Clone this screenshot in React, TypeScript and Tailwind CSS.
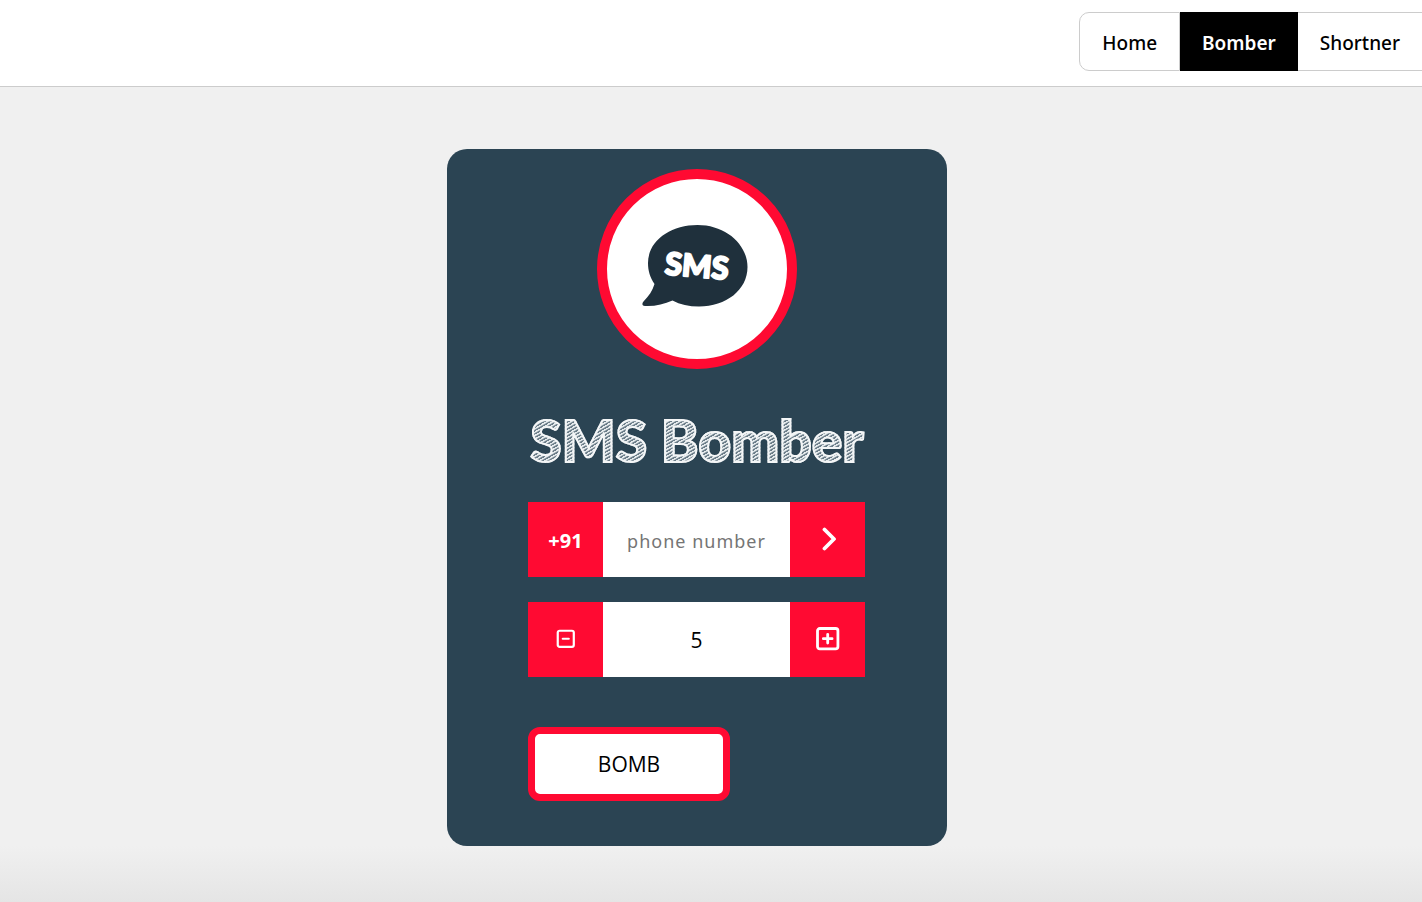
import { useState } from "react";

function SmsLogo() {
  return (
    <svg viewBox="0 0 180 180" className="h-full w-full" role="img" aria-label="SMS">
      <path
        d="M90.500 46 C119 46 140.500 65.500 140.500 88 C140.500 111 119 127.500 92 127.500 C82 127.500 73 125.500 65.500 121.500 C57 125 48 127.500 38 127 C35 126.700 34.700 124.500 36.500 122.500 C42 117 45.500 111.500 47.500 105 C43 98 41 92 41 84 C41 62 63 46 90.500 46 Z"
        fill="#1f303c"
      />
      <text
        x="90"
        y="98"
        textAnchor="middle"
        transform="rotate(5 90 87)"
        fill="#fff"
        stroke="#fff"
        strokeWidth="2"
        strokeLinejoin="round"
        className="font-['Lato',sans-serif] text-[31px] font-black"
      >
        SMS
      </text>
    </svg>
  );
}

function BoxIcon({ plus = false }: { plus?: boolean }) {
  return (
    <svg
      viewBox="0 0 24 24"
      className={plus ? "h-7 w-7" : "h-[22px] w-[22px]"}
      fill="none"
      stroke="currentColor"
      strokeWidth="2.4"
      strokeLinecap="round"
      strokeLinejoin="round"
      aria-hidden="true"
    >
      <rect x="3" y="3" width="17.500" height="17.500" rx="2" />
      <path d={plus ? "M8 11.750h7.500M11.750 8v7.500" : "M8.500 11.750h6.500"} />
    </svg>
  );
}

const links = ["Home", "Bomber", "Shortner"];
const linkClass = "flex items-center px-[22px] pt-1 first:rounded-l-[10px]";
const sideClass = "flex h-[75px] w-[75px] shrink-0 items-center justify-center bg-[#ff0a32] text-white";
const fieldClass = "h-[75px] w-0 min-w-0 grow bg-white text-center outline-none";

export default function App() {
  const [count, setCount] = useState(5);
  const [phone, setPhone] = useState("");

  return (
    <div className="flex min-h-screen flex-col bg-[#f0f0f0] font-['Noto_Sans','Segoe_UI',sans-serif] text-black">
      <header className="flex justify-end border-b border-[#ccc] bg-white pt-3 pb-[15px]">
        <nav className="flex h-[59px] text-[19px]">
          {links.map((label) => (
            <a
              key={label}
              href={`#${label.toLowerCase()}`}
              className={
                label === "Bomber"
                  ? `${linkClass} border-y border-black bg-black font-semibold text-white`
                  : `${linkClass} border-y border-[#ccc] font-medium first:border-x`
              }
            >
              {label}
            </a>
          ))}
        </nav>
      </header>

      <main className="flex grow items-start justify-center bg-linear-to-t from-[#e5e5e5] to-[#f0f0f0] to-[56px] pt-[62px] pr-7 pb-14">
        <section className="flex w-full max-w-[500px] flex-col items-center rounded-[20px] bg-[#2b4453] pt-5 pb-[45px]">
          <div className="h-[200px] w-[200px] rounded-full border-10 border-[#ff0a32] bg-white">
            <SmsLogo />
          </div>

          <h1 className="mt-[34px] bg-[repeating-linear-gradient(150deg,#e6ebed_0_1px,#6b7d89_2px_3px)] bg-clip-text font-['Lato',sans-serif] text-[57px] leading-[74px] font-black whitespace-nowrap text-transparent [-webkit-text-stroke:2px_#f4f6f7]">
            SMS Bomber
          </h1>

          <form className="mt-[25px] w-[338px] max-w-full pr-px" onSubmit={(event) => event.preventDefault()}>
            <div className="flex">
              <label htmlFor="phone" className={`${sideClass} pt-[2px] text-xl font-bold`}>
                +91
              </label>
              <input
                id="phone"
                type="tel"
                value={phone}
                onChange={(event) => setPhone(event.target.value)}
                placeholder="phone number"
                className={`${fieldClass} pt-[2px] text-lg tracking-[1px] placeholder:text-[#757575]`}
              />
              <button type="submit" aria-label="Next" className={`${sideClass} pb-[2px]`}>
                <svg
                  viewBox="0 0 24 24"
                  className="h-6 w-6"
                  fill="none"
                  stroke="currentColor"
                  strokeWidth="3.8"
                  strokeLinecap="round"
                  strokeLinejoin="round"
                  aria-hidden="true"
                >
                  <path d="M8.500 2.500 L18 12 L8.500 21.500" />
                </svg>
              </button>
            </div>

            <div className="mt-[25px] flex">
              <button
                type="button"
                aria-label="Decrease"
                onClick={() => setCount(Math.max(1, count - 1))}
                className={`${sideClass} pb-[2px]`}
              >
                <BoxIcon />
              </button>
              <input
                aria-label="Message count"
                inputMode="numeric"
                value={count}
                onChange={(event) => setCount(Number(event.target.value) || 0)}
                className={`${fieldClass} font-['Open_Sans',sans-serif] text-[21px]`}
              />
              <button
                type="button"
                aria-label="Increase"
                onClick={() => setCount(count + 1)}
                className={`${sideClass} pb-[2px]`}
              >
                <BoxIcon plus />
              </button>
            </div>

            <button
              type="submit"
              className="mt-[50px] h-[74px] w-[202px] rounded-xl border-7 border-[#ff0a32] bg-white pt-[2px] font-['Open_Sans',sans-serif] text-[21px]"
            >
              BOMB
            </button>
          </form>
        </section>
      </main>
    </div>
  );
}
